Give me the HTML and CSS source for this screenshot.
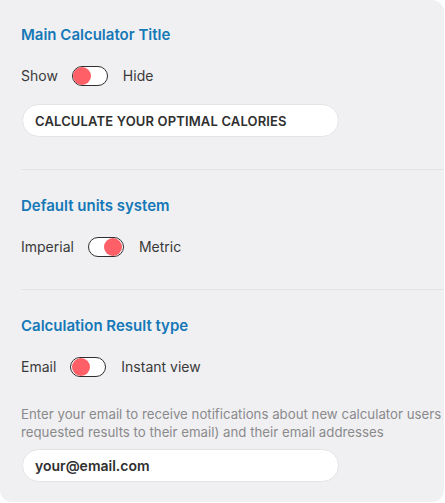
FILE: index.html
```html
<!DOCTYPE html>
<html>
<head>
<meta charset="utf-8">
<link rel="stylesheet" href="styles.css">
</head>
<body>
<div class="card">
  <section class="section first">
    <h2 class="title">Main Calculator Title</h2>
    <div class="row">
      <span class="label">Show</span>
      <span class="toggle"><span class="knob"></span></span>
      <span class="label">Hide</span>
    </div>
    <div class="input caps">CALCULATE YOUR OPTIMAL CALORIES</div>
  </section>
  <section class="section">
    <h2 class="title">Default units system</h2>
    <div class="row">
      <span class="label">Imperial</span>
      <span class="toggle on"><span class="knob"></span></span>
      <span class="label">Metric</span>
    </div>
  </section>
  <section class="section last">
    <h2 class="title">Calculation Result type</h2>
    <div class="row">
      <span class="label">Email</span>
      <span class="toggle"><span class="knob"></span></span>
      <span class="label">Instant view</span>
    </div>
    <p class="desc">Enter your email to receive notifications about new calculator users (who requested results to their email) and their email addresses</p>
    <div class="input">your@email.com</div>
  </section>
</div>
</body>
</html>
```
FILE: styles.css
```css
html, body {
  margin: 0;
  padding: 0;
  background: #ffffff;
}
body {
  font-family: Inter, "Liberation Sans", Arial, sans-serif;
  width: 445px;
  height: 503px;
  overflow: hidden;
}
.card {
  width: 444px;
  height: 502px;
  background: #f0f0f2;
  border-radius: 0 12px 12px 12px;
  overflow: hidden;
  box-sizing: border-box;
}
.section {
  margin-left: 21px;
  padding: 26px 0 32px 0;
  border-top: 1px solid #e3e3e6;
}
.section.first {
  border-top: none;
  padding-top: 25px;
}
.section.last {
  padding-bottom: 0;
}
.title {
  margin: 0;
  font-size: 15px;
  line-height: 20px;
  font-weight: 600;
  color: #1578b7;
}
.row {
  display: flex;
  align-items: center;
  margin-top: 21px;
  height: 20px;
}
.label {
  font-size: 14px;
  color: #3a3a3a;
  line-height: 20px;
}
.toggle {
  position: relative;
  box-sizing: border-box;
  width: 36px;
  height: 20px;
  border: 1.5px solid #2e2e2e;
  border-radius: 10px;
  background: #ffffff;
  margin: 0 15px 0 14px;
}
.knob {
  position: absolute;
  top: -0.5px;
  left: 0.5px;
  width: 18px;
  height: 18px;
  border-radius: 50%;
  background: #ff5f66;
}
.toggle.on .knob {
  left: auto;
  right: 0.5px;
}
.input {
  box-sizing: border-box;
  width: 317px;
  height: 33px;
  margin-top: 18px;
  margin-left: 1px;
  padding: 0 12px;
  background: #ffffff;
  border: 1px solid #e4e4e6;
  border-radius: 17px;
  display: flex;
  align-items: center;
  font-size: 14px;
  font-weight: 600;
  color: #2f2f2f;
}
.input.caps {
  font-size: 13px;
  letter-spacing: 0.15px;
}
.desc {
  margin: 28px 0 0 0;
  width: 490px;
  font-size: 13.25px;
  line-height: 18px;
  color: #8a8a8c;
}
.section.last .input {
  margin-top: 8px;
}
```
